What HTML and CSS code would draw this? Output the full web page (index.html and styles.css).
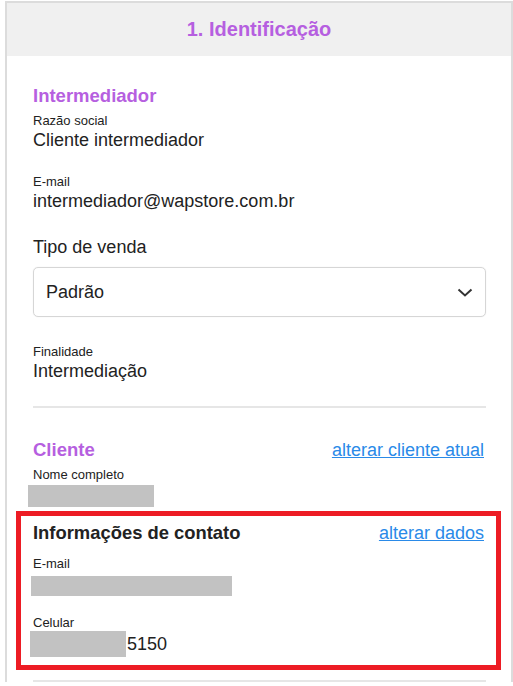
FILE: index.html
```html
<!DOCTYPE html>
<html lang="pt-BR">
<head>
    <meta charset="UTF-8">
    <meta name="viewport" content="width=device-width, initial-scale=1.0">
    <title>Identificação</title>
    <link rel="stylesheet" href="styles.css">
</head>
<body>
    <div class="card">
        <div class="card-header">1. Identificação</div>
        <div class="card-body">

            <!-- Intermediador -->
            <div class="section-title">Intermediador</div>
            <div class="field first">
                <div class="label">Razão social</div>
                <div class="value">Cliente intermediador</div>
            </div>
            <div class="field">
                <div class="label">E-mail</div>
                <div class="value">intermediador@wapstore.com.br</div>
            </div>

            <div class="select-label">Tipo de venda</div>
            <div class="select-box">
                <span>Padrão</span>
                <svg width="16" height="9" viewBox="0 0 16 9">
                    <path d="M1.5 1.5 L8 7.5 L14.5 1.5" fill="none" stroke="#333" stroke-width="2"/>
                </svg>
            </div>

            <div class="field finalidade">
                <div class="label">Finalidade</div>
                <div class="value">Intermediação</div>
            </div>

            <hr class="divider">

            <!-- Cliente -->
            <div class="row-head client-head">
                <div class="section-title">Cliente</div>
                <a href="#" class="link">alterar cliente atual</a>
            </div>
            <div class="field first">
                <div class="label">Nome completo</div>
                <div class="hidden-block name-block"></div>
            </div>

            <div class="contact">
                <div class="row-head">
                    <div class="contact-title">Informações de contato</div>
                    <a href="#" class="link">alterar dados</a>
                </div>
                <div class="contact-field">
                    <div class="label">E-mail</div>
                    <div class="hidden-block mail-block"></div>
                </div>
                <div class="contact-field phone">
                    <div class="label">Celular</div>
                    <div class="phone-row">
                        <div class="hidden-block phone-block"></div>
                        <span class="value">5150</span>
                    </div>
                </div>
            </div>

            <hr class="divider last">
        </div>
    </div>
</body>
</html>
```

FILE: styles.css
```css
body {
    margin: 0;
    font-family: "Liberation Sans", Arial, sans-serif;
    color: #222;
    background: #fff;
}
.card {
    box-sizing: border-box;
    width: 508px;
    margin: 1px 0 0 5px;
    border: 2px solid #dcdcdc;
    border-bottom: none;
}
.card-header {
    height: 53px;
    line-height: 53px;
    background: #f0f0f0;
    text-align: center;
    font-size: 20px;
    font-weight: bold;
    color: #b65fe0;
}
.card-body {
    padding: 29px 25px 0 26px;
}
.section-title {
    font-size: 18.5px;
    line-height: 22px;
    font-weight: bold;
    color: #b65fe0;
}
.label {
    font-size: 13px;
    line-height: 16px;
    color: #222;
}
.value {
    font-size: 18px;
    line-height: 22px;
    color: #222;
}
.field {
    margin-top: 23px;
}
.field.first {
    margin-top: 6px;
}
.select-label {
    margin-top: 24px;
    font-size: 18px;
    line-height: 22px;
}
.select-box {
    box-sizing: border-box;
    height: 50px;
    margin-top: 9px;
    padding: 0 12px 0 12px;
    border: 1px solid #d6d6d6;
    border-radius: 5px;
    box-shadow: 0 0 1px rgba(0, 0, 0, 0.15);
    display: flex;
    align-items: center;
    justify-content: space-between;
    font-size: 18px;
}
.field.finalidade {
    margin-top: 27px;
}
.divider {
    height: 2px;
    margin: 24px 0 0 0;
    border: none;
    background: #e6e6e6;
}
.row-head {
    display: flex;
    justify-content: space-between;
    align-items: baseline;
}
.client-head {
    margin-top: 31px;
    padding-right: 2px;
}
.link {
    font-size: 18px;
    line-height: 22px;
    color: #2a8ae8;
    text-decoration: underline;
}
.hidden-block {
    background: #c2c2c2;
}
.name-block {
    width: 126px;
    height: 22px;
    margin: 2px 0 0 -5px;
}
.contact {
    margin: 4px -15px 0 -17px;
    padding: 6px 12px 8px 12px;
    border: 5px solid #ed1c24;
}
.contact-title {
    font-size: 18.4px;
    line-height: 22px;
    font-weight: bold;
    color: #222;
}
.contact-field {
    margin-top: 12px;
}
.contact-field.phone {
    margin-top: 19px;
}
.mail-block {
    width: 201px;
    height: 20px;
    margin: 4px 0 0 -2px;
}
.phone-row {
    display: flex;
    align-items: center;
}
.phone-block {
    width: 96px;
    height: 26px;
    margin-left: -3px;
    margin-right: 1px;
}
.divider.last {
    margin-top: 10px;
}
```
